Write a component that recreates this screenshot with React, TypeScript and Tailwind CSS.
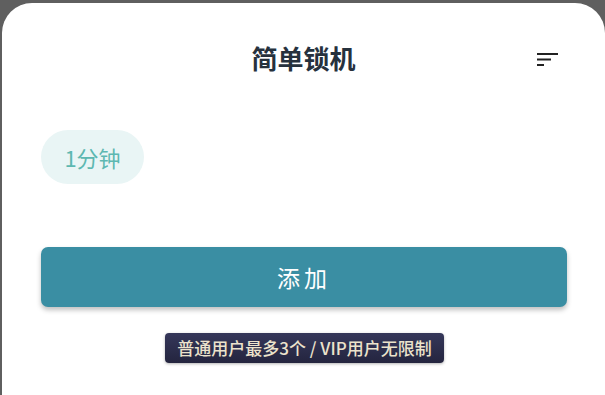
import React from 'react';

const font = { fontFamily: '"Noto Sans CJK SC", "Noto Sans", sans-serif' };

export default function App() {
  return (
    <div className="w-[605px] h-[395px] bg-[#5f5f5f] pt-[3px] pl-[2px] overflow-hidden" style={font}>
      <div className="h-full bg-white rounded-t-[30px] flex flex-col">
        {/* Header */}
        <div className="relative h-[60px] mt-[25px] flex items-center justify-center">
          <h1 className="text-[26px] font-bold text-[#26313d] leading-none">简单锁机</h1>
          <svg className="absolute right-[46px] top-[24px]" width="22" height="16" viewBox="0 0 22 16">
            <rect x="0" y="1" width="21" height="2" fill="#222" />
            <rect x="0" y="6.5" width="14" height="2" fill="#222" />
            <rect x="0" y="12" width="7" height="2" fill="#222" />
          </svg>
        </div>

        {/* Duration chips */}
        <div className="flex mt-[42px] pl-[39px]">
          <div className="w-[103px] h-[54px] rounded-full bg-[#e9f5f5] flex items-center justify-center text-[22px] text-[#5db8b1]">
            1分钟
          </div>
        </div>

        {/* Add button */}
        <div className="mt-[63px] pl-[39px] pr-[38px]">
          <button className="w-full h-[60px] rounded-[7px] bg-[#3a8ea3] text-white text-[23px] shadow-[0_3px_5px_rgba(0,0,0,0.25)] flex items-center justify-center tracking-[4px]">
            添加
          </button>
        </div>

        <div className="flex justify-center mt-[26px] pl-[2px]">
          <div className="h-[30px] px-[12px] rounded-[4px] bg-gradient-to-b from-[#35375a] to-[#24253f] text-[#ece3cc] text-[17px] font-medium flex items-center shadow-[0_1px_3px_rgba(0,0,0,0.3)]">
            普通用户最多3个 / VIP用户无限制
          </div>
        </div>
      </div>
    </div>
  );
}
